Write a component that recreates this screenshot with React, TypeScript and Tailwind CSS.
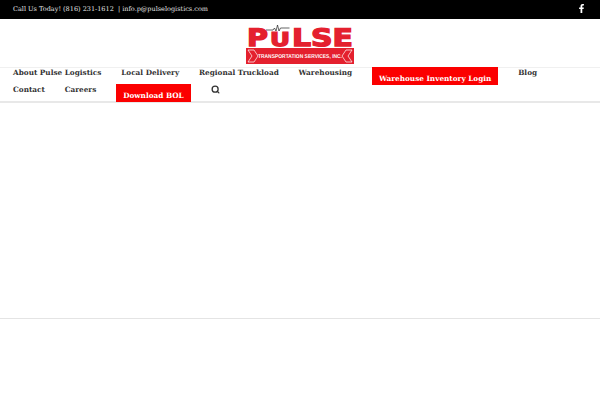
import { Search } from "lucide-react";
import { FaFacebookF } from "react-icons/fa";

const row1 = ["About Pulse Logistics", "Local Delivery", "Regional Truckload", "Warehousing"];

function NavLink({ label }: { label: string }) {
  return <a className="h-[17px] leading-[10px] mr-[19.8px] whitespace-nowrap">{label}</a>;
}

function RedLink({ label }: { label: string }) {
  return (
    <a className="h-[18px] -mt-px mr-[19.8px] px-[7px] pt-[6px] leading-[11px] bg-[#fb0000] text-white whitespace-nowrap">
      {label}
    </a>
  );
}

function LogoWord({ x, y, width, size, children }: { x: number; y: number; width: number; size: number; children: string }) {
  return (
    <text
      x={x}
      y={y}
      textLength={width}
      lengthAdjust="spacingAndGlyphs"
      fill="#e4202e"
      stroke="#e4202e"
      strokeWidth="1.3"
      fontFamily="'DejaVu Sans', sans-serif"
      fontWeight="700"
      fontSize={size}
    >
      {children}
    </text>
  );
}

function Logo() {
  return (
    <svg width="108" height="39" viewBox="0 0 108 39" className="block">
      <LogoWord x={1} y={21} width={21} size={24}>P</LogoWord>
      <LogoWord x={24} y={21} width={20} size={19}>U</LogoWord>
      <LogoWord x={46} y={21} width={61} size={24}>LSE</LogoWord>
      <path d="M20 5h7l1.5-2 1.5 3 1.5-6 1.5 6 1.5-3h9" fill="none" stroke="#222" strokeWidth="0.7" />
      <path d="M0 23h108v16H0z" fill="#e4202e" />
      <path d="M2 25h6l4 6-4 6H2l4-6zM106 25h-6l-4 6 4 6h6l-4-6z" fill="none" stroke="#fff" strokeWidth="0.7" />
      <text
        x="12"
        y="33"
        textLength="84"
        lengthAdjust="spacingAndGlyphs"
        fill="#fff"
        fontFamily="'Liberation Sans', sans-serif"
        fontWeight="700"
        fontSize="5.5"
      >
        TRANSPORTATION SERVICES, INC.
      </text>
    </svg>
  );
}

export default function App() {
  return (
    <div className="w-[600px] h-[400px] bg-white overflow-hidden font-['DejaVu_Serif',serif] [text-rendering:geometricPrecision]">
      <div className="h-[19px] bg-black flex items-center justify-between pl-[13px] pr-[14px] text-[6.5px] text-[#e6e6e6]">
        <span className="whitespace-pre">Call Us Today! (816) 231-1612  | info.p@pulselogistics.com</span>
        <FaFacebookF className="text-white text-[9px] -mt-[3px]" />
      </div>

      <div className="h-[48px] flex justify-center items-start pt-[6px]">
        <Logo />
      </div>

      <nav className="h-[36px] border-t border-[#f0f0f0] border-b-2 border-b-[#e8e8e8] pl-[13px] text-[7.3px] font-bold text-[#333]">
        <div className="flex h-[17px]">
          {row1.map((label) => (
            <NavLink key={label} label={label} />
          ))}
          <RedLink label="Warehouse Inventory Login" />
          <NavLink label="Blog" />
        </div>
        <div className="flex h-[17px]">
          <NavLink label="Contact" />
          <NavLink label="Careers" />
          <RedLink label="Download BOL" />
          <span className="h-[9px] flex items-center">
            <Search size={9} strokeWidth={3.5} className="text-[#333]" />
          </span>
        </div>
      </nav>

      <div className="h-[216px] border-b border-[#e4e4e4]" />
    </div>
  );
}
